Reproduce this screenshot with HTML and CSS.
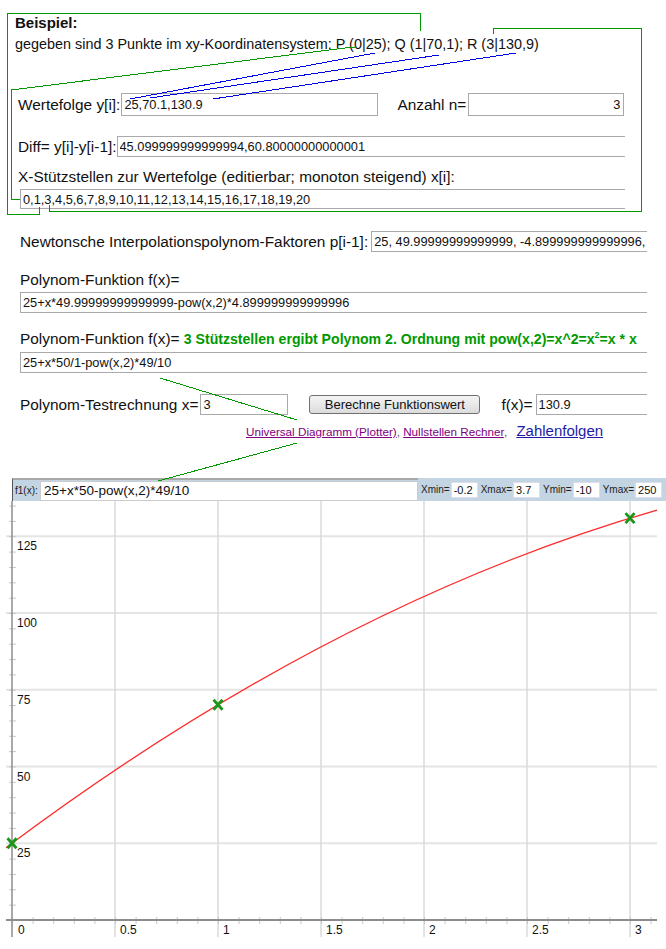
FILE: index.html
```html
<!DOCTYPE html>
<html lang="de">
<head>
  <meta charset="UTF-8" />
  <title>Newton Interpolationspolynom</title>
  <link rel="stylesheet" href="styles.css">
</head>
<body>
<div class="page">

  <div class="intro">
    <div class="intro-title">Beispiel:</div>
    <div class="intro-text">gegeben sind 3 Punkte im xy-Koordinatensystem: P (0|25); Q (1|70,1); R (3|130,9)</div>
  </div>

  <div class="row row-werte">
    <span>Wertefolge y[i]:</span>
    <input class="inp inp-werte" type="text" value="25,70.1,130.9">
    <span class="lbl-anzahl">Anzahl n=</span>
    <input class="inp inp-anzahl" type="text" value="3">
  </div>

  <div class="row row-diff">
    <span>Diff= y[i]-y[i-1]:</span>
    <input class="inp open grow" type="text" value="45.099999999999994,60.80000000000001">
  </div>

  <div class="lbl lbl-x">X-Stützstellen zur Wertefolge (editierbar; monoton steigend) x[i]:</div>
  <input class="inp open inp-x" type="text" value="0,1,3,4,5,6,7,8,9,10,11,12,13,14,15,16,17,18,19,20">

  <div class="row row-newton">
    <span>Newtonsche Interpolationspolynom-Faktoren p[i-1]:</span>
    <input class="inp open grow" type="text" value="25, 49.99999999999999, -4.899999999999996,">
  </div>

  <div class="lbl lbl-poly">Polynom-Funktion f(x)=</div>
  <input class="inp open inp-poly" type="text" value="25+x*49.99999999999999-pow(x,2)*4.899999999999996">

  <div class="lbl lbl-poly2">Polynom-Funktion f(x)= <span class="hint">3 Stützstellen ergibt Polynom 2. Ordnung mit pow(x,2)=x^2=x<sup>2</sup>=x * x</span></div>
  <input class="inp open inp-poly inp-poly2" type="text" value="25+x*50/1-pow(x,2)*49/10">

  <div class="row row-test">
    <span>Polynom-Testrechnung x=</span>
    <input class="inp inp-x-test" type="text" value="3">
    <button class="btn" type="button">Berechne Funktionswert</button>
    <span class="lbl-fx">f(x)=</span>
    <input class="inp open grow inp-fx" type="text" value="130.9">
  </div>

  <div class="links">
    <a href="#plotter" class="visited">Universal Diagramm (Plotter)</a><span class="sep">, </span><a href="#nullstellen" class="visited">Nullstellen Rechner</a><span class="sep">, </span><a href="#zahlenfolgen" class="big">Zahlenfolgen</a>
  </div>

  <div class="plot-head">
    <div class="fn">
      <span class="fn-label">f1(x):</span>
      <input class="fn-input" type="text" value="25+x*50-pow(x,2)*49/10">
    </div>
    <div class="range">
      <span>Xmin=</span><input type="text" value="-0.2">
      <span>Xmax=</span><input type="text" value="3.7">
      <span>Ymin=</span><input type="text" value="-10">
      <span>Ymax=</span><input type="text" value="250">
    </div>
  </div>

  <svg class="plot" width="666" height="439" viewBox="0 0 666 439">
    <defs>
      <pattern id="xticks" x="12" y="0" width="20.6" height="439" patternUnits="userSpaceOnUse">
        <rect x="0" y="0" width="1" height="439" fill="#c8c8c8"/>
      </pattern>
      <pattern id="yticks" x="0" y="4.55" width="666" height="15.35" patternUnits="userSpaceOnUse">
        <rect x="0" y="0" width="666" height="1" fill="#c8c8c8"/>
      </pattern>
    </defs>
    <!-- grid -->
    <g stroke="#e4e4e4" stroke-width="2">
      <line x1="6" y1="342.25" x2="657" y2="342.25"/>
      <line x1="6" y1="265.5" x2="657" y2="265.5"/>
      <line x1="6" y1="188.75" x2="657" y2="188.75"/>
      <line x1="6" y1="112" x2="657" y2="112"/>
      <line x1="6" y1="35.25" x2="657" y2="35.25"/>
    </g>
    <g stroke="#dadada" stroke-width="1.5">
      <line x1="115" y1="0" x2="115" y2="436"/>
      <line x1="218" y1="0" x2="218" y2="436"/>
      <line x1="321" y1="0" x2="321" y2="436"/>
      <line x1="424" y1="0" x2="424" y2="436"/>
      <line x1="527" y1="0" x2="527" y2="436"/>
      <line x1="630" y1="0" x2="630" y2="436"/>
    </g>
    <!-- ticks -->
    <rect x="12" y="416" width="645" height="7" fill="url(#xticks)"/>
    <rect x="9" y="0" width="7" height="420" fill="url(#yticks)"/>
    <!-- axes -->
    <line x1="6" y1="419" x2="657" y2="419" stroke="#8c8c8c" stroke-width="2"/>
    <line x1="12" y1="0" x2="12" y2="436" stroke="#8c8c8c" stroke-width="1.5"/>
    <!-- labels -->
    <g class="axis-text">
      <text x="18" y="433">0</text>
      <text x="120" y="433">0.5</text>
      <text x="223" y="433">1</text>
      <text x="326" y="433">1.5</text>
      <text x="429" y="433">2</text>
      <text x="532" y="433">2.5</text>
      <text x="635" y="433">3</text>
      <text x="17" y="356">25</text>
      <text x="17" y="279.5">50</text>
      <text x="17" y="202.5">75</text>
      <text x="17" y="126">100</text>
      <text x="17" y="49">125</text>
    </g>
    <!-- f(x) = 25 + 50x - 4.9x^2 -->
    <path d="M6 346.7 Q331.5 102.8 657 9.1" fill="none" stroke="#ff2a2a" stroke-width="1.3"/>
    <g stroke="#1a961a" stroke-width="2.8" fill="none">
      <path d="M7.5 337.25 L16.5 347.25 M16.5 337.25 L7.5 347.25"/>
      <path d="M213.5 198.8 L222.5 208.8 M222.5 198.8 L213.5 208.8"/>
      <path d="M625.5 12.1 L634.5 22.1 M634.5 12.1 L625.5 22.1"/>
    </g>
  </svg>

  <!-- connector lines drawn over the form -->
  <svg class="connectors" width="666" height="949" viewBox="0 0 666 949" shape-rendering="crispEdges">
    <g fill="none" stroke="#009900" stroke-width="1">
      <polyline points="420,31 420,13 7,13 7,214 39,214 39,207"/>
      <polyline points="355,47 345,48 11,90 11,199 20,199"/>
      <polyline points="493,34 493,28 641,28 641,211 49,211 49,205"/>
      <polyline points="160,378 297,420"/>
      <polyline points="297,443 158,481"/>
    </g>
    <g fill="none" stroke="#0000e6" stroke-width="1">
      <polyline points="375,53 130,99"/>
      <polyline points="439,55 150,98"/>
      <polyline points="516,53 213,99"/>
    </g>
  </svg>

</div>
</body>
</html>
```

FILE: styles.css
```css
body {
  margin: 0;
  font-family: "Liberation Sans", Arial, sans-serif;
  color: #111;
  background: #fff;
}
.page {
  position: relative;
  width: 666px;
  height: 949px;
  overflow: hidden;
}

/* intro box */
.intro {
  padding: 14px 0 0 15px;
}
.intro-title {
  font-weight: bold;
  font-size: 15px;
  line-height: 18px;
}
.intro-text {
  margin-top: 3px;
  font-size: 14.4px;
  line-height: 18px;
  white-space: nowrap;
}

/* form rows */
.row {
  display: flex;
  align-items: center;
  font-size: 15.4px;
  white-space: nowrap;
}
.lbl {
  font-size: 15.4px;
  line-height: 18px;
  white-space: nowrap;
}
.inp {
  box-sizing: border-box;
  height: 21px;
  margin: 0;
  padding: 0 2px;
  border: 1px solid #a9a9a9;
  background: #fff;
  color: #111;
  font: 12.8px "Liberation Sans", Arial, sans-serif;
  outline: none;
}
.inp.open {
  border-right: none; /* field runs past the visible edge */
}
.grow {
  flex: 1;
  min-width: 0;
}

.row-werte {
  margin-top: 40px;
  height: 23px;
  padding-left: 18px;
}
.row-werte .inp {
  height: 23px;
}
.inp-werte {
  width: 257px;
  margin-left: 1px;
}
.lbl-anzahl {
  margin-left: 19px;
}
.inp-anzahl {
  width: 156px;
  margin-left: 2px;
  padding-right: 3px;
  text-align: right;
}

.row-diff {
  margin-top: 20px;
  height: 21px;
  width: 607px;
  padding-left: 18px;
}

.lbl-x {
  margin-top: 11px;
  padding-left: 18px;
}
.inp-x {
  display: block;
  width: 605px;
  height: 20px;
  margin: 3px 0 0 20px;
}

.row-newton {
  margin-top: 22px;
  height: 21px;
  width: 627px;
  padding-left: 20px;
}
.row-newton .inp {
  margin-left: 3px;
}

.lbl-poly {
  margin-top: 19px;
  padding-left: 20px;
}
.inp-poly {
  display: block;
  width: 627px;
  margin: 3px 0 0 20px;
}
.lbl-poly2 {
  margin-top: 17px;
  padding-left: 20px;
}
.hint {
  color: #009900;
  font-weight: bold;
  font-size: 14.1px;
}
.hint sup {
  font-size: 9px;
  line-height: 0;
}
.inp-poly2 {
  margin-top: 4px;
}

.row-test {
  margin-top: 21px;
  height: 21px;
  width: 627px;
  padding-left: 20px;
}
.inp-x-test {
  width: 88px;
  margin-left: 2px;
}
.btn {
  box-sizing: border-box;
  width: 171px;
  height: 19px;
  margin-left: 21px;
  padding: 0;
  border: 1px solid #707070;
  border-radius: 3px;
  background: linear-gradient(#f4f4f4, #dcdcdc);
  color: #111;
  font: 13px "Liberation Sans", Arial, sans-serif;
}
.lbl-fx {
  margin-left: 21px;
}
.inp-fx {
  margin-left: 3px;
}

/* links */
.links {
  margin: 8px 0 0 246px;
  height: 16px;
  line-height: 16px;
  font-size: 11.7px;
  white-space: nowrap;
}
.links a.visited {
  color: #800080;
}
.links .sep {
  color: #555;
}
.links a.big {
  margin-left: 6px;
  font-size: 15px;
  color: #1c1ca8;
}

/* plotter */
.plot-head {
  display: flex;
  height: 23px;
  margin: 39px 0 0 12px;
}
.fn {
  box-sizing: border-box;
  display: flex;
  align-items: center;
  width: 406px;
  border-top: 2px solid #a8a8a8;
  border-left: 1px solid #555;
  background: #c3d4e2;
}
.fn-label {
  width: 25px;
  padding-left: 2px;
  font-size: 10px;
  color: #222;
}
.fn-input {
  box-sizing: border-box;
  flex: 1;
  height: 20px;
  margin: 0;
  padding: 0 3px;
  border: 1px solid #ccc;
  background: #fff;
  font: 13.5px "Liberation Sans", Arial, sans-serif;
  color: #111;
  outline: none;
}
.range {
  flex: 1;
  display: flex;
  align-items: center;
  padding-left: 3px;
  background: #c3d4e2;
  font-size: 10px;
  color: #222;
  white-space: nowrap;
}
.range input {
  box-sizing: border-box;
  width: 27px;
  height: 16px;
  margin: 0 3px 0 1px;
  padding: 0 2px;
  border: 1px solid #dde;
  background: #fff;
  font: 11px "Liberation Sans", Arial, sans-serif;
  color: #111;
  outline: none;
}

.plot {
  display: block;
}
.axis-text text {
  font: 12px "Liberation Sans", Arial, sans-serif;
  fill: #111;
}

.connectors {
  position: absolute;
  top: 0;
  left: 0;
  pointer-events: none;
}
```
